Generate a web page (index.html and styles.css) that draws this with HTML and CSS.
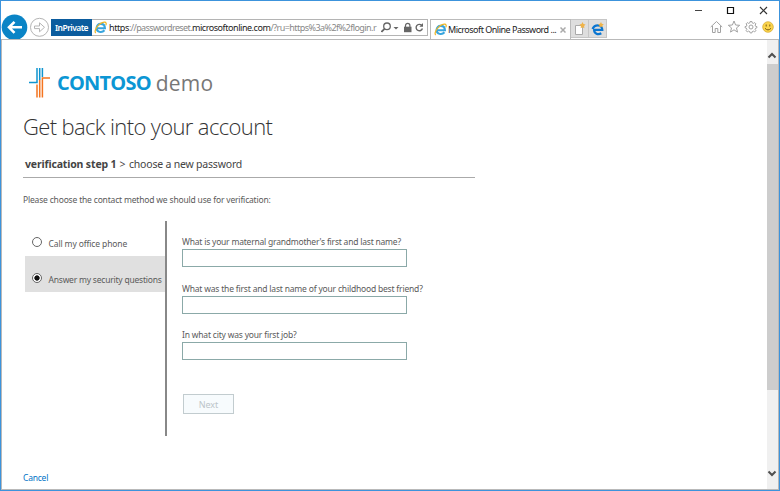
FILE: index.html
```
<!DOCTYPE html>
<html lang="en">
<head>
<meta charset="utf-8">
<title>Microsoft Online Password Reset</title>
<link rel="stylesheet" href="styles.css">
</head>
<body>
<div class="window">
  <header class="chrome">
    <div class="captions">
      <svg width="80" height="18" viewBox="0 0 80 18" fill="none"><path d="M0 9.500h7" stroke="#444"/><path d="M32.500 6.500h6v6h-6z" stroke="#111" stroke-width="1.200"/><path d="M65 6l7 7M72 6l-7 7" stroke="#333" stroke-width="1.200"/></svg>
    </div>
    <div class="toolbar">
      <svg class="nav" width="50" height="25" viewBox="0 0 50 25" fill="none">
        <circle cx="13.500" cy="13.300" r="12.800" fill="#0a84c6"/><path d="M21 13.300H8.500M13.500 7.800L8 13.300l5.500 5.500" stroke="#fff" stroke-width="2.600"/>
        <circle cx="38.500" cy="13.300" r="9" stroke="#b5b5b5"/><path d="M33.500 12h5V8.800l5 4.500-5 4.500v-3.200h-5z" stroke="#b5b5b5"/>
      </svg>
      <div class="address">
        <span class="badge"><span class="t t-badge">InPrivate</span></span>
        <svg class="ie" width="13" height="13" viewBox="0 0 14 14"><use href="#ie"/></svg>
        <div class="url"><span class="t t-scheme">https</span><span class="t t-pass">://passwordreset.</span><span class="t t-domain">microsoftonline.com</span><span class="t t-query">/?ru=https%3a%2f%2flogin.r</span></div>
        <svg class="tools" width="46" height="15" viewBox="0 0 46 15" fill="none" stroke="#666">
          <circle cx="6" cy="6.300" r="3.300" stroke-width="1.300"/><path d="M3.500 8.800L.5 11.800" stroke-width="1.700"/><path d="M12.500 7h5L15 9.500z" fill="#666" stroke="none"/>
          <path d="M23 6.700h7.500v5.500H23z" fill="#666" stroke="none"/><path d="M24.500 7V5.500a2.200 2.200 0 014.400 0V7" stroke-width="1.200"/>
          <path d="M40.600 5.300A3.200 3.200 0 1041.400 8.500" stroke-width="1.400"/><path d="M42 3v3.700h-3.600z" fill="#666" stroke="none"/>
        </svg>
      </div>
      <div class="tab">
        <svg class="icon" width="13" height="13" viewBox="0 0 14 14"><use href="#ie"/></svg>
        <span class="t t-tab">Microsoft Online Password ...</span>
        <svg class="close" width="6" height="6" viewBox="0 0 6 6"><path d="M.5.5l5 5M5.500.5l-5 5" stroke="#aaa" stroke-width="1.500"/></svg>
      </div>
      <div class="tabbtn"><svg class="icon" width="13" height="14" viewBox="0 0 13 14"><path d="M2.500 3.500h7v9h-7z" fill="#fff" stroke="#aaa"/><path d="M9.500 0l1 2 2 .5-1.400 1.500.3 2.200-1.900-1-1.900 1 .3-2.200L6.500 2.500l2-.5z" fill="#f0b347"/></svg></div>
      <div class="tabbtn"><svg class="icon" width="13" height="14" viewBox="0 0 13 14"><path d="M10.300 11.200C7 13.200 3 11.500 3.100 7.800h8.200C11.300 4.900 9.300 3.300 6.900 3.300 4 3.300 2.300 5 1.500 7" fill="none" stroke="#0b76d1" stroke-width="2.200"/><path d="M10 0l.8 1.800 2 .4-1.400 1.400.3 2-1.700-1-1.700 1 .3-2L7 2.200l2-.4z" fill="#f0b347"/></svg></div>
      <svg class="actions" width="64" height="14" viewBox="0 0 64 14" fill="none" stroke="#a2a2a2">
        <path d="M.7 7L6.500 1.500 12.200 7M2.500 6v6.500h2.700V8.500h2.600v4h2.700V6"/>
        <path d="M24 1l1.600 4 4.100.3-3.200 2.600 1 4.200L24 9.800l-3.500 2.300 1-4.200-3.200-2.600 4.100-.3z"/>
        <circle cx="41" cy="7" r="2"/><path d="M40.100 1.500h1.800l.3 1.400 1.200.5 1.300-.8 1.200 1.200-.8 1.300.5 1.200 1.300.3v1.200l-1.300.4-.5 1.200.8 1.300-1.200 1.200-1.300-.8-1.200.5-.3 1.300h-1.800l-.3-1.300-1.200-.5-1.300.8-1.200-1.200.8-1.300-.5-1.200-1.300-.4V6.600l1.300-.3.500-1.200-.8-1.300 1.200-1.200 1.300.8 1.200-.5z"/>
        <circle cx="58" cy="7" r="5.300" fill="#fbd44c" stroke="#d3a62b" stroke-width=".7"/><path d="M56.200 4.500v2M59.800 4.500v2M55 8.300q3 3.200 6 0" stroke="#7a5c14"/>
      </svg>
    </div>
  </header>
  <div class="viewport">
    <main class="page">
      <div class="brand">
        <svg width="22" height="30" viewBox="0 0 22 30" fill="none" stroke-width="1.500">
          <path d="M0 14.500h8V0M10.700 0v12M13.400 0v9" stroke="#1095cf"/>
          <path d="M21 10H13.400V29.500M10.700 12V29.500M8 16.500v13" stroke="#f4741f"/>
        </svg>
        <span class="t t-contoso">CONTOSO</span><span class="t t-demo">demo</span>
      </div>
      <h1><span class="t t-h1">Get back into your account</span></h1>
      <div class="steps"><span class="t t-step">verification step 1</span><span class="t t-gt">&gt;</span><span class="t t-choose">choose a new password</span></div>
      <p class="intro"><span class="t t-intro">Please choose the contact method we should use for verification:</span></p>
      <div class="verify">
        <div class="methods">
          <div class="method"><i class="radio"></i><span class="t t-call">Call my office phone</span></div>
          <div class="method selected"><i class="radio on"></i><span class="t t-answer">Answer my security questions</span></div>
        </div>
        <div class="questions">
          <div class="q"><span class="t t-q1">What is your maternal grandmother's first and last name?</span><input></div>
          <div class="q"><span class="t t-q2">What was the first and last name of your childhood best friend?</span><input></div>
          <div class="q"><span class="t t-q3">In what city was your first job?</span><input></div>
          <div class="next"><span class="t t-next">Next</span></div>
        </div>
      </div>
      <div class="cancel"><span class="t t-cancel">Cancel</span></div>
    </main>
    <div class="scrollbar">
      <svg width="10" height="24" viewBox="0 0 10 24"><path d="M1.500 17.500L5 14l3.500 3.500" fill="none" stroke="#505050" stroke-width="2"/></svg>
      <div class="thumb"></div>
      <svg class="down" width="10" height="24" viewBox="0 0 10 24"><path d="M1.500 6.500L5 10l3.500-3.500" fill="none" stroke="#505050" stroke-width="2"/></svg>
    </div>
  </div>
</div>
<svg class="defs" width="0" height="0"><defs><g id="ie"><path d="M11.300 10C8.500 13.300 2.900 12 2.800 7.800h9C11.700 4.700 9.700 3.100 7.200 3.100A4.400 4.400 0 002.800 7.500" fill="none" stroke="#38a5de" stroke-width="2.200"/><path d="M2 13C-1 11 5 2 11 1.300c2.500-.3 2.400 1.700 1.700 3.200" fill="none" stroke="#efb625" stroke-width="1.300"/></g></defs></svg>
</body>
</html>
```

FILE: styles.css
```
* { box-sizing: border-box; }
body { margin: 0; overflow: hidden; background: #fff; font-family: "Noto Sans", "Open Sans", sans-serif; color: #5a5a5a; }
.window { width: 780px; height: 491px; border: 1px solid #3c93dc; display: flex; flex-direction: column; }
.defs { display: block; }
.t { white-space: nowrap; }
.icon { flex: none; }
.chrome { height: 38px; }
.captions { height: 13px; padding-left: 694px; }
.captions svg { display: block; }
.toolbar { height: 25px; display: flex; align-items: flex-start; }
.nav { display: block; flex: none; }
.address { margin-top: 5px; width: 377px; height: 17px; border: 1px solid #b4b4b4; display: flex; align-items: center; flex: none; }
.badge { width: 41px; height: 17px; margin-left: -1px; background: #0b5c9e; color: #fff; display: flex; align-items: center; justify-content: center; font-size: 8.500px; font-weight: 600; flex: none; }
.t-badge { letter-spacing: -0.55px; }
.ie { margin: 0 2px; flex: none; }
.url { width: 268.500px; overflow: hidden; white-space: nowrap; font-size: 9px; line-height: 14px; color: #888; flex: none; }
.t-scheme, .t-domain { color: #222; }
.t-scheme { letter-spacing: -0.4px; }
.t-pass { letter-spacing: -0.62px; }
.t-domain { letter-spacing: -0.45px; }
.t-query { letter-spacing: -0.55px; }
.tools { margin-left: 3px; flex: none; }
.tab { margin: 5px 0 0 2px; width: 141px; height: 20px; border: 1px solid #bbb; border-bottom: 0; display: flex; align-items: center; padding-left: 3px; font-size: 9px; color: #222; flex: none; }
.t-tab { margin-left: 1px; letter-spacing: -0.5px; }
.close { margin-left: 4px; flex: none; }
.tabbtn { margin-top: 5px; width: 18px; height: 19px; background: #dedede; border: 1px solid #c6c6c6; border-left: 0; display: flex; align-items: center; justify-content: center; flex: none; }
.actions { margin: 6px 0 0 103px; flex: none; }
.viewport { flex: 1; border: 1px solid #b9b9b9; display: flex; min-height: 0; }
.page { flex: 1; padding: 27px 0 0 21px; min-width: 0; }
.brand { height: 31px; display: flex; align-items: center; padding-left: 6px; line-height: 30px; }
.t-contoso { margin-left: 6px; font: bold 20px/30px "Open Sans"; letter-spacing: -0.8px; color: #0c96d4; }
.t-demo { margin-left: 5px; font: 21px/30px "Open Sans"; letter-spacing: 0.2px; color: #777; }
h1 { margin: 12px 0 0; height: 32px; font: 300 22px/32px "Open Sans"; letter-spacing: -0.63px; color: #333; }
.steps { margin-top: 12px; height: 24px; width: 452px; border-bottom: 1px solid #aaa; padding-left: 2px; font-size: 10.500px; line-height: 20px; color: #444; display: flex; }
.t-step { font-weight: bold; letter-spacing: -0.15px; }
.t-gt { margin: 0 3.500px 0 3px; }
.t-choose { letter-spacing: -0.2px; }
.intro { margin: 15px 0 0; height: 14px; font-size: 8.500px; line-height: 14px; display: flex; letter-spacing: -0.18px; }
.verify { margin-top: 14px; height: 215px; display: flex; font-size: 8.500px; }
.methods { width: 144px; border-right: 2px solid #888; padding-left: 2px; }
.method { height: 35px; display: flex; align-items: center; padding: 8px 0 0 7px; }
.t-call { letter-spacing: -0.13px; padding-top: 2px; }
.t-answer { letter-spacing: -0.21px; padding-top: 2px; }
.selected { background: #e0e0e0; height: 36px; }
.radio { width: 10px; height: 10px; border: 1px solid #666; border-radius: 50%; background: #fff; margin: -1px 6.500px 0 0; flex: none; }
.radio.on { background: radial-gradient(#111 0 2.300px, #fff 3px); }
.questions { padding: 14px 0 0 15px; }
.q { height: 46.500px; display: flex; flex-direction: column; line-height: 14px; letter-spacing: -0.19px; }
.t-q1 { letter-spacing: -0.21px; }
input { display: block; width: 225px; height: 18px; border: 1px solid #8ba9a8; padding: 0; }
.next { margin: 19px 0 0 1px; width: 51px; height: 20px; border: 1px solid #c2cccf; background: #f7fbfd; color: #bcc5ca; display: flex; align-items: center; justify-content: center; font-size: 9px; padding-top: 2px; }
.cancel { margin-top: 35px; font-size: 8.500px; line-height: 14px; letter-spacing: -0.22px; color: #0072c6; display: flex; }
.scrollbar { width: 11px; background: #f0f0f0; display: flex; flex-direction: column; }
.thumb { height: 326px; background: #cdcdcd; }
.down { margin-top: auto; }
```
